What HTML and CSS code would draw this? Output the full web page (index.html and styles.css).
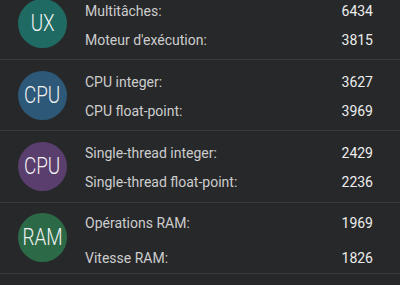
FILE: index.html
```html
<!DOCTYPE html>
<html lang="fr">
<head>
<meta charset="utf-8">
<link rel="stylesheet" href="styles.css">
</head>
<body>
<div class="list">
  <section class="group">
    <div class="badge badge-ux"><span>UX</span></div>
    <div class="rows">
      <div class="row"><span class="label">Multitâches:</span><span class="value">6434</span></div>
      <div class="row"><span class="label">Moteur d'exécution:</span><span class="value">3815</span></div>
    </div>
  </section>
  <section class="group">
    <div class="badge badge-cpu"><span>CPU</span></div>
    <div class="rows">
      <div class="row"><span class="label">CPU integer:</span><span class="value">3627</span></div>
      <div class="row"><span class="label">CPU float-point:</span><span class="value">3969</span></div>
    </div>
  </section>
  <section class="group">
    <div class="badge badge-single"><span>CPU</span></div>
    <div class="rows">
      <div class="row"><span class="label">Single-thread integer:</span><span class="value">2429</span></div>
      <div class="row"><span class="label">Single-thread float-point:</span><span class="value">2236</span></div>
    </div>
  </section>
  <section class="group">
    <div class="badge badge-ram"><span>RAM</span></div>
    <div class="rows rows-wide">
      <div class="row"><span class="label">Opérations RAM:</span><span class="value">1969</span></div>
      <div class="row"><span class="label">Vitesse RAM:</span><span class="value">1826</span></div>
    </div>
  </section>
  <section class="group"></section>
</div>
</body>
</html>
```
FILE: styles.css
```css
html, body {
  margin: 0;
  padding: 0;
  background: #28292b;
}
body {
  font-family: Roboto, "Noto Sans", sans-serif;
  width: 400px;
  height: 285px;
  overflow: hidden;
}
.list {
  margin-top: -11.33px;
}
.group {
  display: flex;
  align-items: center;
  height: 70.33px;
  padding-left: 18px;
  border-bottom: 1px solid #3a3b3d;
  background: #27282a;
}
.badge {
  flex: 0 0 49px;
  height: 49px;
  border-radius: 50%;
  display: flex;
  align-items: center;
  justify-content: center;
  color: #f2f2f2;
  font-weight: 300;
  font-size: 23px;
}
.badge span {
  display: inline-block;
  transform: scaleX(0.82);
}
.badge-ux { background: #1f6a62; }
.badge-cpu { background: #2d5877; }
.badge-single { background: #5a3e6e; }
.badge-ram { background: #2c6a47; }
.rows {
  flex: 1;
  margin-left: 18px;
  padding-right: 27px;
  padding-top: 4px;
  font-size: 14px;
}
.row {
  display: flex;
  justify-content: space-between;
  line-height: 29px;
}
.rows-wide {
  padding-top: 6px;
}
.rows-wide .row {
  line-height: 35px;
}
.label {
  color: #cdcdcd;
}
.value {
  color: #ededed;
}
```
